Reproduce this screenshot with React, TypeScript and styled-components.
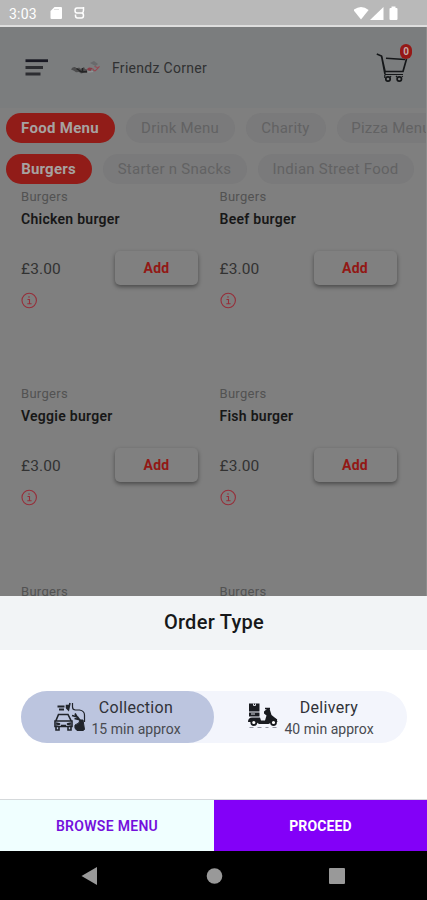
import React from 'react';
import styled, { createGlobalStyle } from 'styled-components';

const Global = createGlobalStyle`
  * { box-sizing: border-box; }
  body { margin: 0; background: #000; }
  button { font-family: inherit; padding: 0; border: 0; }
`;

const Screen = styled.div`
  width: 427px;
  height: 900px;
  display: flex;
  flex-direction: column;
  overflow: hidden;
  font-family: Roboto, sans-serif;
  background: #fff;
`;

const StatusBar = styled.div`
  height: 27px;
  flex: none;
  display: flex;
  align-items: center;
  padding: 0 26px 0 9px;
  background: #b9b9b9;
  border-bottom: 2px solid #dedede;
  color: #fff;
`;

const Clock = styled.span`
  width: 41px;
  font-size: 14px;
  line-height: 24px;
  padding-top: 2px;
  letter-spacing: 0.2px;
`;

const StatusSpacer = styled.div`
  flex: 1;
`;

const Page = styled.main`
  height: 569px;
  flex: none;
  overflow: hidden;
  background: #7f7f7f;
  border-right: 1px solid #8d8d8d;
`;

const Header = styled.header`
  height: 81px;
  display: flex;
  align-items: center;
  padding: 0 16px 0 25px;
  background: #7b7d7e;
`;

const LogoBox = styled.div`
  width: 32px;
  height: 20px;
  margin: 0 9px 0 22px;
`;

const Brand = styled.h1`
  flex: 1;
  margin: 0;
  font-size: 14px;
  font-weight: 400;
  line-height: 20px;
  letter-spacing: 0.29px;
  color: #303132;
`;

const Cart = styled.div`
  position: relative;
  width: 34px;
  height: 34px;
`;

const Badge = styled.span`
  position: absolute;
  top: -7px;
  right: -2px;
  width: 12px;
  height: 15px;
  border-radius: 6px;
  background: #951816;
  color: #c3a9a8;
  font-size: 10px;
  font-weight: 700;
  line-height: 15px;
  text-align: center;
`;

const Pills = styled.div<{ $top: number }>`
  display: flex;
  gap: 11px;
  padding: ${p => p.$top}px 0 0 6px;
`;

const Pill = styled.button<{ $w: number; $active?: boolean; $spacing: number }>`
  flex: none;
  width: ${p => p.$w}px;
  height: 30px;
  padding-right: 1px;
  border-radius: 15px;
  font-size: 15px;
  line-height: 30px;
  white-space: nowrap;
  font-weight: ${p => (p.$active ? 700 : 400)};
  letter-spacing: ${p => p.$spacing}px;
  background: ${p => (p.$active ? '#911c18' : '#7a7a7b')};
  color: ${p => (p.$active ? '#a6a2a1' : '#626263')};
`;

const Products = styled.section`
  display: grid;
  grid-template-columns: 198.5px 198.5px;
  grid-auto-rows: 197.3px;
  padding: 4px 0 0 21px;
`;

const Card = styled.article`
  display: flex;
  flex-direction: column;
  align-items: flex-start;
`;

const Category = styled.span`
  font-size: 13px;
  line-height: 18px;
  letter-spacing: 0.3px;
  color: #525252;
`;

const Title = styled.h2`
  margin: 4px 0 0;
  font-size: 14px;
  font-weight: 600;
  line-height: 18px;
  letter-spacing: 0.27px;
  color: #171717;
`;

const Purchase = styled.div`
  width: 177px;
  height: 34px;
  margin-top: 23px;
  display: flex;
  align-items: center;
  justify-content: space-between;
`;

const Price = styled.span`
  padding-top: 2px;
  font-size: 15.5px;
  letter-spacing: 0.15px;
  color: #323232;
`;

const AddButton = styled.button`
  width: 83px;
  height: 34px;
  border-radius: 5px;
  background: #808080;
  box-shadow: 0 2px 4px rgba(0, 0, 0, 0.42);
  color: #921815;
  font-size: 14px;
  font-weight: 700;
  letter-spacing: 0.2px;
`;

const InfoIcon = styled.svg`
  margin-top: 7px;
  display: block;
`;

const Sheet = styled.section`
  height: 255px;
  flex: none;
  display: flex;
  flex-direction: column;
  background: #fff;
`;

const SheetTitle = styled.h2`
  height: 54px;
  margin: 0;
  padding-left: 1px;
  background: #f2f4f6;
  color: #17181a;
  font-size: 20px;
  font-weight: 500;
  line-height: 53px;
  letter-spacing: 0.28px;
  text-align: center;
`;

const Toggle = styled.div`
  display: flex;
  width: 386px;
  height: 52px;
  margin: 41px 0 56px 21px;
  border-radius: 26px;
  background: #f3f5fc;
`;

const Choice = styled.button<{ $selected?: boolean }>`
  width: 193px;
  height: 52px;
  display: flex;
  align-items: center;
  padding-left: ${p => (p.$selected ? 32 : 33)}px;
  border-radius: 26px;
  background: ${p => (p.$selected ? '#bcc5df' : 'transparent')};
`;

const ChoiceText = styled.div<{ $gap: number }>`
  flex: none;
  width: 92px;
  margin-left: ${p => p.$gap}px;
  padding-top: 1px;
  display: flex;
  flex-direction: column;
  align-items: center;
  white-space: nowrap;
`;

const ChoiceName = styled.span`
  font-size: 16px;
  line-height: 22px;
  letter-spacing: 0.3px;
  color: #303238;
`;

const ChoiceTime = styled.span`
  font-size: 14px;
  line-height: 20px;
  letter-spacing: 0.03px;
  color: #484a50;
`;

const Actions = styled.div`
  height: 52px;
  display: flex;
  border-top: 1px solid #d5d9db;
`;

const Action = styled.button<{ $primary?: boolean }>`
  width: ${p => (p.$primary ? 213 : 214)}px;
  background: ${p => (p.$primary ? '#8300f8' : '#f0ffff')};
  color: ${p => (p.$primary ? '#fff' : '#7410dc')};
  font-size: 14px;
  font-weight: ${p => (p.$primary ? 700 : 600)};
  letter-spacing: ${p => (p.$primary ? 0.15 : 0.3)}px;
`;

const NavBar = styled.nav`
  height: 49px;
  display: flex;
  align-items: center;
  justify-content: space-between;
  padding: 0 81px 0 81px;
  background: #000;
`;

const StorageIcon = () => (
  <svg width="24" height="18" viewBox="0 0 24 18">
    <path d="M4.500 3h6.500q1 0 1 1v10q0 1-1 1h-9.500q-1 0-1-1V7z" fill="#fff" />
    <path d="M4 5.500h5" stroke="#d8d8d8" strokeWidth=".8" />
  </svg>
);

const SwirlIcon = () => (
  <svg width="12" height="18" viewBox="0 0 12 18">
    <path d="M9.500 4H3Q1 4 1 6.500T3 9h4.500q2 0 2 2.500T7.500 14H3.500q-2 0-2-2.200V10.500M3.500 9h5q1-1 1-3V3" fill="none" stroke="#fff" strokeWidth="1.500" />
  </svg>
);

const SignalIcons = () => (
  <svg width="47" height="18" viewBox="0 0 47 18">
    <path d="M-.6 6Q7 0 14.600 6L7 15.500z" fill="#fff" />
    <path d="M16 16 29.500 3v13z" fill="#fff" />
    <path d="M37.500 4V2.500h4V4h1q1 0 1 1v10q0 1-1 1h-6q-1 0-1-1V5q0-1 1-1z" fill="#fff" />
  </svg>
);

const MenuIcon = () => (
  <svg width="24" height="18" viewBox="0 0 24 18">
    <path d="M.5 1.700h22.500" stroke="#191923" strokeWidth="2.800" />
    <path d="M.5 8.500h17.500M.5 15h15" stroke="#2c2d31" strokeWidth="2.800" />
  </svg>
);

const Logo = () => (
  <svg width="32" height="20" viewBox="0 0 32 20">
    <path d="M0 11.500q1-3 4-2.500l2 1.500 2-1 2 1.500 3-2 1 2 2 .5v3.500l-3-.3-3 .9-2-1.500-3 .2-2-1.500z" fill="#4d4d4e" />
    <path d="M8 12.500l3 1.500 5-.5M11.500 10v4M5.500 10.500l3 2" stroke="#242425" strokeWidth="1.500" fill="none" />
    <path d="M16 11l2-1.500 3.500.4-2 3-3-.6z" fill="#873d48" />
    <path d="M21.500 10.500q2 4 4 1l3-3.200M23.500 8.500l3 1" fill="none" stroke="#964852" strokeWidth="1.200" />
    <path d="M19 5l4-2 4 3-2.500 2z" fill="#696a6c" />
    <path d="M17 14l5-.4" stroke="#96989b" strokeWidth="1" />
  </svg>
);

const CartIcon = () => (
  <svg width="34" height="34" viewBox="0 0 34 34" fill="none" stroke="#151719">
    <path d="M.8 3 5.500 5 9 20.500h18L30.500 8M5.800 6 9 23" strokeWidth="1.700" />
    <path d="M10 7.300 29 8.500" strokeWidth="1.500" />
    <path d="M9 23.500h18" strokeWidth="1" />
    <circle cx="12" cy="28" r="2.200" strokeWidth="1.700" />
    <circle cx="23.300" cy="28" r="2.200" strokeWidth="1.700" />
    <path d="M8.800 23.500v3.500M14 26.500l1-1.500M21 26l-1-1M26 26l.7-1" strokeWidth="1.200" />
  </svg>
);

const CollectionIcon = () => (
  <svg width="34" height="30" viewBox="0 0 34 30" fill="none" stroke="#20242b">
    <path d="M4.500 4.500h7M6 7.500h5" strokeWidth="2.200" />
    <path d="M13.500 3.500h2v2h-2zM17 1l-1.500 7-2-2" fill="#20242b" strokeWidth="1.500" />
    <path d="M19.500 1v4q0 3 3 3h4q5 1 5 5v7" strokeWidth="1.200" />
    <path d="M3 18.500 5.500 12.500h9.500l3 6M2 19h17v5.500H2zM3 25v3h3v-3m9 0v3h3v-3" strokeWidth="1.600" />
    <path d="M3 21l4 1-4 1m15-2-4 1 4 1M8 23.500h5" strokeWidth="1.300" />
    <path d="M19 13.500 24.500 15l3 4M22 11.500l3.500 6-4-1" strokeWidth="1.700" />
    <path d="M22 23q5-1.500 5-5h3l1.500 9.500-1.500 1h-6q-3-2-2-5.500z" fill="#20242b" strokeWidth="1" />
  </svg>
);

const DeliveryIcon = () => (
  <svg width="34" height="30" viewBox="0 0 34 30">
    <path d="M2 1.500h10.500v8H2zM2 10.500h10.500v4H2z" fill="#191b20" />
    <path d="M6.500 1.500v2h2v-2M4 12h4" fill="none" stroke="#d8dbe2" strokeWidth="1" />
    <path d="M1 20q0-4.500 4-4.500h8l1 3h4l1.500-5-2.500-2v-2l3.500-3h2l2 6.500 5 4 1 3h-5l-4 2H12L9 20z" fill="#191b20" />
    <path d="M18 6.500h5M24 16l6 2" stroke="#191b20" strokeWidth="1.500" />
    <circle cx="6.800" cy="20.500" r="2.500" fill="#fff" stroke="#191b20" strokeWidth="1.800" />
    <circle cx="26.500" cy="20.500" r="2.500" fill="#fff" stroke="#191b20" strokeWidth="1.800" />
    <path d="M2.500 25.500h4m4 0h4m4 0h3m4 0h4" stroke="#9295a0" strokeWidth="1.200" />
  </svg>
);

const products = ['Chicken burger', 'Beef burger', 'Veggie burger', 'Fish burger'];

const Product = ({ name }: { name: string }) => (
  <Card>
    <Category>Burgers</Category>
    <Title>{name}</Title>
    <Purchase>
      <Price>£3.00</Price>
      <AddButton>Add</AddButton>
    </Purchase>
    <InfoIcon width="17" height="17" viewBox="0 0 17 17" fill="none" stroke="#962e39">
      <circle cx="8.200" cy="8.500" r="7.200" strokeWidth="1.100" />
      <path d="M6.500 7.500h2v4M6.300 11.700h4.300M8 4.300v1.400" strokeWidth="1.100" />
    </InfoIcon>
  </Card>
);

export default function App() {
  return (
    <Screen>
      <Global />
      <StatusBar>
        <Clock>3:03</Clock>
        <StorageIcon />
        <SwirlIcon />
        <StatusSpacer />
        <SignalIcons />
      </StatusBar>
      <Page>
        <Header>
          <MenuIcon />
          <LogoBox><Logo /></LogoBox>
          <Brand>Friendz Corner</Brand>
          <Cart>
            <CartIcon />
            <Badge>0</Badge>
          </Cart>
        </Header>
        <Pills $top={5}>
          <Pill $w={109} $active $spacing={0.3}>Food Menu</Pill>
          <Pill $w={109} $spacing={0.2}>Drink Menu</Pill>
          <Pill $w={80} $spacing={0.2}>Charity</Pill>
          <Pill $w={109} $spacing={0.2}>Pizza Menu</Pill>
        </Pills>
        <Pills $top={11}>
          <Pill $w={86} $active $spacing={0.2}>Burgers</Pill>
          <Pill $w={144} $spacing={0.25}>Starter n Snacks</Pill>
          <Pill $w={156} $spacing={0.25}>Indian Street Food</Pill>
        </Pills>
        <Products>
          {products.map(name => <Product key={name} name={name} />)}
          <Card><Category>Burgers</Category></Card>
          <Card><Category>Burgers</Category></Card>
        </Products>
      </Page>
      <Sheet>
        <SheetTitle>Order Type</SheetTitle>
        <Toggle>
          <Choice $selected>
            <CollectionIcon />
            <ChoiceText $gap={3}>
              <ChoiceName>Collection</ChoiceName>
              <ChoiceTime>15 min approx</ChoiceTime>
            </ChoiceText>
          </Choice>
          <Choice>
            <DeliveryIcon />
            <ChoiceText $gap={2}>
              <ChoiceName>Delivery</ChoiceName>
              <ChoiceTime>40 min approx</ChoiceTime>
            </ChoiceText>
          </Choice>
        </Toggle>
        <Actions>
          <Action>BROWSE MENU</Action>
          <Action $primary>PROCEED</Action>
        </Actions>
      </Sheet>
      <NavBar>
        <svg width="18" height="20" viewBox="0 0 18 20"><path d="M.5 10 16 1v18z" fill="#999" /></svg>
        <svg width="18" height="18" viewBox="0 0 18 18"><circle cx="9.500" cy="9" r="7.800" fill="#999" /></svg>
        <svg width="18" height="18" viewBox="0 0 18 18"><rect x="1" y="1" width="16" height="16" rx="1" fill="#999" /></svg>
      </NavBar>
    </Screen>
  );
}
